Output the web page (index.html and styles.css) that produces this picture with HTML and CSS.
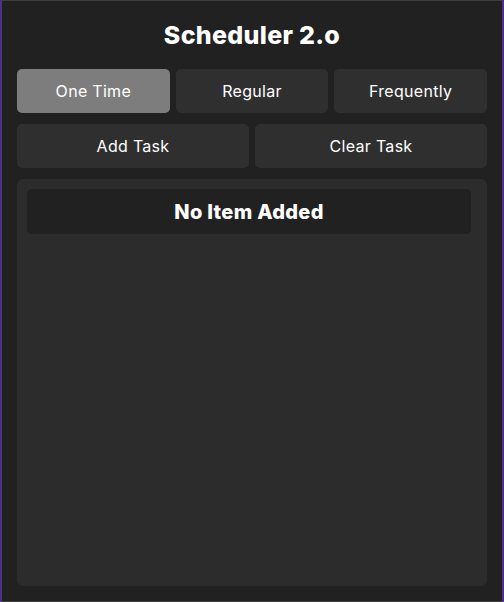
FILE: index.html
```html
<!DOCTYPE html>
<html>
<head>
<meta charset="utf-8">
<link rel="stylesheet" href="styles.css">
</head>
<body>
<div class="app">
  <h1 class="title">Scheduler 2.o</h1>
  <div class="row three">
    <button class="btn active">One Time</button>
    <button class="btn">Regular</button>
    <button class="btn">Frequently</button>
  </div>
  <div class="row two">
    <button class="btn">Add Task</button>
    <button class="btn">Clear Task</button>
  </div>
  <div class="list">
    <div class="item">No Item Added</div>
  </div>
</div>
</body>
</html>
```

FILE: styles.css
```css
html, body {
  margin: 0;
  padding: 0;
  height: 602px;
  overflow: hidden;
}
body {
  background: #4f3188;
  padding: 0 2px;
  font-family: Inter, "Open Sans", sans-serif;
}
.app {
  height: 602px;
  box-sizing: border-box;
  background: #212121;
  border-top: 1px solid #3d3d3d;
  border-bottom: 1px solid #3d3d3d;
  padding: 0 15px 15px;
  display: flex;
  flex-direction: column;
}
.title {
  margin: 0;
  height: 68px;
  display: flex;
  align-items: center;
  justify-content: center;
  color: #ffffff;
  font-size: 25px;
  font-weight: 800;
  letter-spacing: 0.3px;
}
.row {
  display: grid;
  gap: 6px;
  margin-bottom: 11px;
}
.row.three { grid-template-columns: 1fr 1fr 1fr; }
.row.two { grid-template-columns: 1fr 1fr; }
.btn {
  height: 44px;
  border: none;
  border-radius: 5px;
  background: #2f2f2f;
  color: #ffffff;
  font-family: inherit;
  font-size: 16px;
  font-weight: 400;
  letter-spacing: 0.3px;
  padding: 0;
}
.btn.active {
  background: #7d7d7d;
}
.list {
  flex: 1;
  background: #2c2c2c;
  border-radius: 6px;
  padding: 10px 16px 10px 10px;
}
.item {
  height: 45px;
  background: #212121;
  border-radius: 5px;
  display: flex;
  align-items: center;
  justify-content: center;
  color: #ffffff;
  font-size: 20px;
  font-weight: 800;
  letter-spacing: 0.3px;
}
```
